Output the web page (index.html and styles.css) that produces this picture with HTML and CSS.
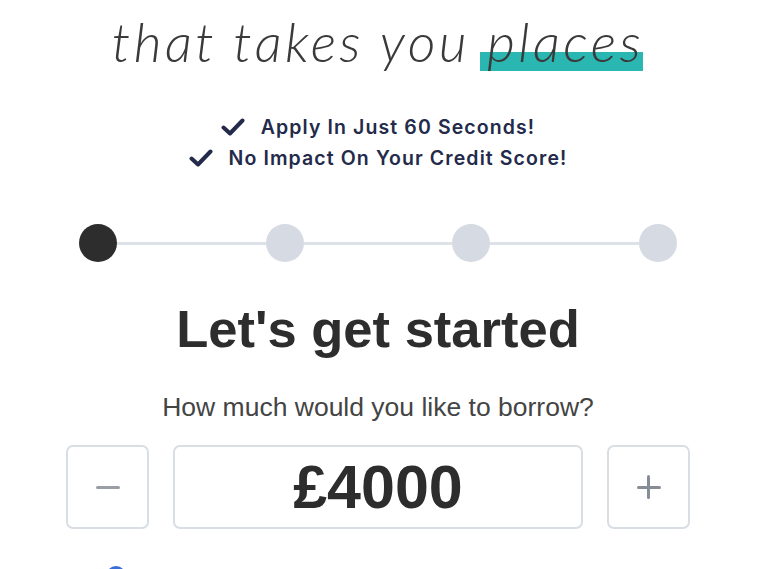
FILE: index.html
```html
<!DOCTYPE html>
<html>
	<head>
		<meta charset="utf-8">
		<title>Loan application</title>
		<link rel="stylesheet" href="styles.css">
	</head>
	<body>
		<div class="page">
			<h2 class="tagline">that takes you <span class="hl">places</span></h2>

			<ul class="perks">
				<li>
					<svg class="tick" viewBox="0 0 24 18" width="24" height="18"><path d="M2.5 9.5 L9 15.5 L21.5 2.5" fill="none" stroke="#232a4a" stroke-width="4" stroke-linecap="round" stroke-linejoin="round"/></svg>
					Apply In Just 60 Seconds!
				</li>
				<li>
					<svg class="tick" viewBox="0 0 24 18" width="24" height="18"><path d="M2.5 9.5 L9 15.5 L21.5 2.5" fill="none" stroke="#232a4a" stroke-width="4" stroke-linecap="round" stroke-linejoin="round"/></svg>
					No Impact On Your Credit Score!
				</li>
			</ul>

			<div class="steps">
				<span class="dot active"></span>
				<span class="bar"></span>
				<span class="dot"></span>
				<span class="bar"></span>
				<span class="dot"></span>
				<span class="bar"></span>
				<span class="dot"></span>
			</div>

			<h1 class="title">Let's get started</h1>
			<p class="question">How much would you like to borrow?</p>

			<div class="amount">
				<button class="step-btn minus" aria-label="less"><span></span></button>
				<div class="value">£4000</div>
				<button class="step-btn plus" aria-label="more"><span></span></button>
			</div>

			<div class="next-row">
				<span class="radio"></span>
			</div>
		</div>
	</body>
</html>
```

FILE: styles.css
```css
body {
  margin: 0;
  background: #ffffff;
  font-family: "Liberation Sans", Arial, sans-serif;
  color: #2d2d2d;
}

.page {
  width: 624px;
  margin: 0 0 0 66px;
}

/*** Heading **/

.tagline {
  margin: 0;
  padding-top: 12px;
  height: 68px;
  text-align: center;
  font-family: "Lato", sans-serif;
  font-weight: 300;
  font-style: italic;
  font-size: 54px;
  letter-spacing: 3.4px;
  line-height: 60px;
  color: #3a3a3a;
}

.hl {
  position: relative;
}

.hl::before {
  content: "";
  position: absolute;
  left: -7px;
  right: 1px;
  top: 43px;
  height: 19px;
  background: #2bb7b1;
  z-index: -1;
}

/*** Perks **/

.perks {
  list-style: none;
  margin: 31px 0 0;
  padding: 0;
  font-family: "Inter", sans-serif;
  font-weight: 600;
  font-size: 19.5px;
  letter-spacing: 1.1px;
  color: #232a4a;
}

.perks li {
  display: flex;
  align-items: center;
  justify-content: center;
  gap: 16px;
  height: 31px;
}

/*** Stepper **/

.steps {
  display: flex;
  align-items: center;
  margin: 51px 13px 0;
}

.dot {
  width: 38px;
  height: 38px;
  border-radius: 50%;
  background: #d5dae3;
  flex: none;
}

.dot.active {
  background: #2d2d2d;
}

.bar {
  flex: 1;
  height: 3px;
  background: #dde1e8;
}

/*** Question **/

.title {
  margin: 37px 0 0;
  text-align: center;
  font-size: 52.5px;
  font-weight: 700;
  line-height: 60px;
  color: #2d2d2d;
}

.question {
  margin: 33px 0 0;
  text-align: center;
  font-size: 26.5px;
  line-height: 30px;
  color: #444;
}

.amount {
  display: flex;
  gap: 24px;
  margin-top: 23px;
}

.step-btn,
.value {
  height: 84px;
  box-sizing: border-box;
  border: 2px solid #d9dde4;
  border-radius: 7px;
  background: #fff;
}

.step-btn {
  width: 83px;
  padding: 0;
  display: flex;
  align-items: center;
  justify-content: center;
}

.step-btn span {
  position: relative;
  width: 24px;
  height: 3px;
  background: #9a9ea5;
  border-radius: 2px;
}

.plus span {
  background: #878d96;
}

.plus span::after {
  content: "";
  position: absolute;
  left: 10.5px;
  top: -10.5px;
  width: 3px;
  height: 24px;
  background: #878d96;
  border-radius: 2px;
}

.value {
  flex: 1;
  display: flex;
  align-items: center;
  justify-content: center;
  font-size: 61px;
  font-weight: 700;
  color: #2d2d2d;
}

.next-row {
  margin-top: 37px;
  padding-left: 40px;
}

.radio {
  display: block;
  width: 20px;
  height: 20px;
  border-radius: 50%;
  background: #3a6fd8;
}
```
